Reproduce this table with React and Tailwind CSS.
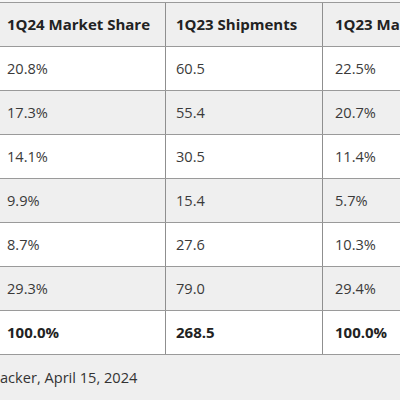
import React from "react";

const rows = [
  ["20.8%", "60.5", "22.5%"],
  ["17.3%", "55.4", "20.7%"],
  ["14.1%", "30.5", "11.4%"],
  ["9.9%", "15.4", "5.7%"],
  ["8.7%", "27.6", "10.3%"],
  ["29.3%", "79.0", "29.4%"],
];

function Row({ cells, bg, bold }) {
  const weight = bold ? "font-bold text-[#222] text-[15px]" : "font-normal text-[#3a3a3a] text-[14.6px]";
  return (
    <div className={`flex h-[44px] border-b border-[#9a9a9a] ${bg}`}>
      <div className={`w-[171px] shrink-0 border-r border-[#8f8f8f] pl-3 flex items-center ${weight}`}>{cells[0]}</div>
      <div className={`w-[157px] shrink-0 border-r border-[#8f8f8f] pl-[10px] flex items-center ${weight}`}>{cells[1]}</div>
      <div className={`flex-1 pl-3 flex items-center whitespace-nowrap ${weight}`}>{cells[2]}</div>
    </div>
  );
}

export default function App() {
  return (
    <div className="w-[400px] h-[400px] overflow-hidden bg-[#efefef] leading-none" style={{ fontFamily: '"Open Sans", "Liberation Sans", sans-serif' }}>
      <div className="h-[2px] bg-[#f6f6f6]" />
      <div className="ml-[-5px] w-[420px] border-t border-[#9a9a9a]">
        <Row cells={["1Q24 Market Share", "1Q23 Shipments", "1Q23 Market Share"]} bg="bg-[#efefef]" bold />
        {rows.map((r, i) => (
          <Row key={i} cells={r} bg={i % 2 === 0 ? "bg-white" : "bg-[#efefef]"} />
        ))}
        <Row cells={["100.0%", "268.5", "100.0%"]} bg="bg-white" bold />
      </div>
      <div className="h-[45px] flex items-center text-[14.6px] text-[#333] whitespace-nowrap">acker, April 15, 2024</div>
    </div>
  );
}
